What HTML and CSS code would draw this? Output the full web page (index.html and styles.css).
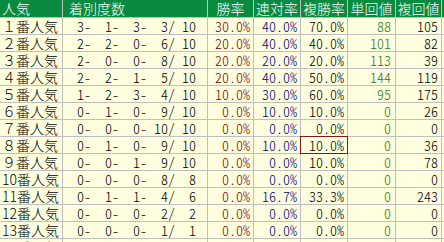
FILE: index.html
```html
<!DOCTYPE html>
<html lang="ja">
<head>
<meta charset="utf-8">
<title>人気別成績</title>
<link rel="stylesheet" href="styles.css">
</head>
<body>
<table class="stats">
  <colgroup>
    <col class="c-pop"><col class="c-cnt"><col class="c-win"><col class="c-ren"><col class="c-fuku"><col class="c-tan"><col class="c-fkv"><col class="c-more">
  </colgroup>
  <thead>
    <tr>
      <th class="h-left">人気</th>
      <th class="h-cnt">着別度数</th>
      <th>勝率</th>
      <th>連対率</th>
      <th>複勝率</th>
      <th>単回値</th>
      <th>複回値</th>
      <th></th>
    </tr>
  </thead>
  <tbody>
    <tr><td class="pop">１番人気</td><td class="cnt"><span>3-</span><span>1-</span><span>3-</span><span>3/</span><span class="n">10</span></td><td class="win">30.0%</td><td class="ren">40.0%</td><td class="fuku">70.0%</td><td class="tan">88</td><td class="fkv">105</td><td></td></tr>
    <tr><td class="pop">２番人気</td><td class="cnt"><span>2-</span><span>2-</span><span>0-</span><span>6/</span><span class="n">10</span></td><td class="win">20.0%</td><td class="ren">40.0%</td><td class="fuku">40.0%</td><td class="tan">101</td><td class="fkv">82</td><td></td></tr>
    <tr><td class="pop">３番人気</td><td class="cnt"><span>2-</span><span>0-</span><span>0-</span><span>8/</span><span class="n">10</span></td><td class="win">20.0%</td><td class="ren">20.0%</td><td class="fuku">20.0%</td><td class="tan">113</td><td class="fkv">39</td><td></td></tr>
    <tr><td class="pop">４番人気</td><td class="cnt"><span>2-</span><span>2-</span><span>1-</span><span>5/</span><span class="n">10</span></td><td class="win">20.0%</td><td class="ren">40.0%</td><td class="fuku">50.0%</td><td class="tan">144</td><td class="fkv">119</td><td></td></tr>
    <tr><td class="pop">５番人気</td><td class="cnt"><span>1-</span><span>2-</span><span>3-</span><span>4/</span><span class="n">10</span></td><td class="win">10.0%</td><td class="ren">30.0%</td><td class="fuku">60.0%</td><td class="tan">95</td><td class="fkv">175</td><td></td></tr>
    <tr><td class="pop">６番人気</td><td class="cnt"><span>0-</span><span>1-</span><span>0-</span><span>9/</span><span class="n">10</span></td><td class="win">0.0%</td><td class="ren">10.0%</td><td class="fuku">10.0%</td><td class="tan">0</td><td class="fkv">26</td><td></td></tr>
    <tr><td class="pop">７番人気</td><td class="cnt"><span>0-</span><span>0-</span><span>0-</span><span>10/</span><span class="n">10</span></td><td class="win">0.0%</td><td class="ren">0.0%</td><td class="fuku">0.0%</td><td class="tan">0</td><td class="fkv">0</td><td></td></tr>
    <tr><td class="pop">８番人気</td><td class="cnt"><span>0-</span><span>1-</span><span>0-</span><span>9/</span><span class="n">10</span></td><td class="win">0.0%</td><td class="ren">10.0%</td><td class="fuku marked">10.0%</td><td class="tan">0</td><td class="fkv">36</td><td></td></tr>
    <tr><td class="pop">９番人気</td><td class="cnt"><span>0-</span><span>0-</span><span>1-</span><span>9/</span><span class="n">10</span></td><td class="win">0.0%</td><td class="ren">0.0%</td><td class="fuku">10.0%</td><td class="tan">0</td><td class="fkv">78</td><td></td></tr>
    <tr><td class="pop">10番人気</td><td class="cnt"><span>0-</span><span>0-</span><span>0-</span><span>8/</span><span class="n">8</span></td><td class="win">0.0%</td><td class="ren">0.0%</td><td class="fuku">0.0%</td><td class="tan">0</td><td class="fkv">0</td><td></td></tr>
    <tr><td class="pop">11番人気</td><td class="cnt"><span>0-</span><span>1-</span><span>1-</span><span>4/</span><span class="n">6</span></td><td class="win">0.0%</td><td class="ren">16.7%</td><td class="fuku">33.3%</td><td class="tan">0</td><td class="fkv">243</td><td></td></tr>
    <tr><td class="pop">12番人気</td><td class="cnt"><span>0-</span><span>0-</span><span>0-</span><span>2/</span><span class="n">2</span></td><td class="win">0.0%</td><td class="ren">0.0%</td><td class="fuku">0.0%</td><td class="tan">0</td><td class="fkv">0</td><td></td></tr>
    <tr><td class="pop">13番人気</td><td class="cnt"><span>0-</span><span>0-</span><span>0-</span><span>1/</span><span class="n">1</span></td><td class="win">0.0%</td><td class="ren">0.0%</td><td class="fuku">0.0%</td><td class="tan">0</td><td class="fkv">0</td><td></td></tr>
    <tr><td class="pop">14番人気</td><td class="cnt"><span>0-</span><span>0-</span><span>0-</span><span>1/</span><span class="n">1</span></td><td class="win">0.0%</td><td class="ren">0.0%</td><td class="fuku">0.0%</td><td class="tan">0</td><td class="fkv">0</td><td></td></tr>
  </tbody>
</table>
</body>
</html>
```

FILE: styles.css
```css
html, body {
  margin: 0;
  padding: 0;
  background: #ffffff;
  overflow: hidden;
}

body {
  font-family: "Noto Sans CJK JP", "Noto Sans CJK SC", sans-serif;
  font-size: 14px;
  font-weight: 300;
  color: #000000;
}

.stats {
  border-collapse: separate;
  border-spacing: 1px;
  background: #bfbfbf;
  table-layout: fixed;
  width: 484px;
  margin: -1px 0 0 -1px;
}

.c-pop { width: 62px; }
.c-cnt { width: 144px; }
.c-win { width: 45px; }
.c-ren { width: 46px; }
.c-fuku { width: 46px; }
.c-tan { width: 47px; }
.c-fkv { width: 45px; }
.c-more { width: 40px; }

.stats th {
  background: #088a40;
  color: #ffffff;
  font-weight: 300;
  height: 17px;
  line-height: 17px;
  padding: 0;
  text-align: center;
  white-space: nowrap;
  overflow: hidden;
}

.stats th.h-left {
  text-align: left;
  padding-left: 2px;
}

.stats th.h-cnt {
  text-align: left;
  padding-left: 6px;
}

.stats td {
  background: #ffffe0;
  height: 16px;
  line-height: 16px;
  padding: 0 3px 0 0;
  text-align: right;
  white-space: nowrap;
  overflow: hidden;
  font-feature-settings: "hwid" 1;
}

.stats td.pop {
  text-align: left;
  padding: 0 0 0 2px;
  font-feature-settings: normal;
}

.stats td.cnt {
  text-align: left;
  padding: 0;
}

.cnt span {
  display: inline-block;
  width: 28px;
  text-align: right;
}

.cnt span.n {
  width: 21px;
}

.win { color: #800000; }
.ren { color: #000080; }
.fuku { color: #000000; }
.stats td.tan { color: #1f7a1f; padding-right: 4px; }
.fkv { color: #000000; }

.stats td.marked {
  outline: 1px solid #7a1a1a;
  outline-offset: 0;
}
```
